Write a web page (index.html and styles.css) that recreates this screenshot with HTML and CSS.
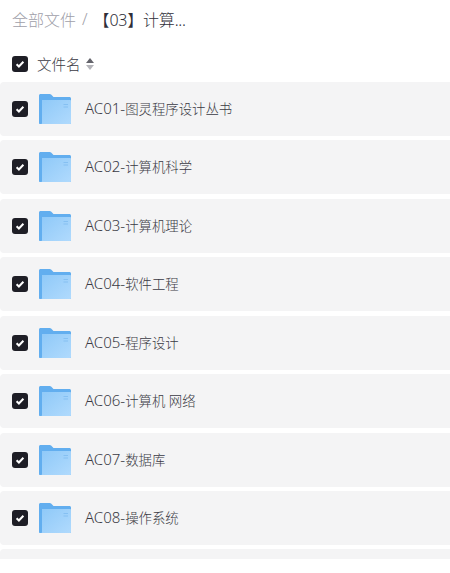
FILE: index.html
```html
<!DOCTYPE html>
<html lang="zh">
<head>
    <meta charset="UTF-8">
    <meta name="viewport" content="width=device-width, initial-scale=1.0">
    <title>全部文件</title>
    <link rel="stylesheet" href="styles.css">
</head>
<body>
    <svg class="defs" width="0" height="0" aria-hidden="true">
        <defs>
            <linearGradient id="folder-front" x1="0" y1="0" x2="1" y2="1">
                <stop offset="0" stop-color="#8fc9f8"/>
                <stop offset="1" stop-color="#b0dafd"/>
            </linearGradient>
            <symbol id="folder" viewBox="0 0 32 30">
                <path d="M0 1.500C0 .7.7 0 1.500 0h9.200c.6 0 1 .2 1.400.6L14.500 3h16c.8 0 1.500.7 1.500 1.500V29c0 .6-.4 1-1 1H1c-.6 0-1-.4-1-1z" fill="#62aeef"/>
                <path d="M3 6h28c.6 0 1 .4 1 1v22c0 .6-.4 1-1 1H2.500c.3-.2.500-.6.500-1z" fill="url(#folder-front)"/>
                <path d="M24.500 10h4.500v1h-4.500zM24.500 12.500h4.500v1h-4.500z" fill="#85c0f2"/>
            </symbol>
            <symbol id="check" viewBox="0 0 16 16">
                <rect width="16" height="16" rx="3" fill="#1e1e26"/>
                <path d="M4.600 8.200l2.300 2.300 4.500-4.800" fill="none" stroke="#fff" stroke-width="2"/>
            </symbol>
        </defs>
    </svg>

    <div class="breadcrumb">
        <span class="crumb-root">全部文件</span>
        <span class="crumb-sep">/</span>
        <span class="crumb-current">【03】计算...</span>
    </div>

    <div class="list-head">
        <svg class="checkbox"><use href="#check"/></svg>
        <span class="head-label">文件名</span>
        <svg class="sort" width="8" height="12" viewBox="0 0 8 12">
            <path d="M4 0l4 5H0z" fill="#63636b"/>
            <path d="M4 12L0 7h8z" fill="#b4b4b9"/>
        </svg>
    </div>

    <div class="file-list">
        <div class="file-row">
            <svg class="checkbox"><use href="#check"/></svg>
            <svg class="folder"><use href="#folder"/></svg>
            <span class="file-name"><span class="file-code">AC01-</span>图灵程序设计丛书</span>
        </div>
        <div class="file-row">
            <svg class="checkbox"><use href="#check"/></svg>
            <svg class="folder"><use href="#folder"/></svg>
            <span class="file-name"><span class="file-code">AC02-</span>计算机科学</span>
        </div>
        <div class="file-row">
            <svg class="checkbox"><use href="#check"/></svg>
            <svg class="folder"><use href="#folder"/></svg>
            <span class="file-name"><span class="file-code">AC03-</span>计算机理论</span>
        </div>
        <div class="file-row">
            <svg class="checkbox"><use href="#check"/></svg>
            <svg class="folder"><use href="#folder"/></svg>
            <span class="file-name"><span class="file-code">AC04-</span>软件工程</span>
        </div>
        <div class="file-row">
            <svg class="checkbox"><use href="#check"/></svg>
            <svg class="folder"><use href="#folder"/></svg>
            <span class="file-name"><span class="file-code">AC05-</span>程序设计</span>
        </div>
        <div class="file-row">
            <svg class="checkbox"><use href="#check"/></svg>
            <svg class="folder"><use href="#folder"/></svg>
            <span class="file-name"><span class="file-code">AC06-</span>计算机 网络</span>
        </div>
        <div class="file-row">
            <svg class="checkbox"><use href="#check"/></svg>
            <svg class="folder"><use href="#folder"/></svg>
            <span class="file-name"><span class="file-code">AC07-</span>数据库</span>
        </div>
        <div class="file-row">
            <svg class="checkbox"><use href="#check"/></svg>
            <svg class="folder"><use href="#folder"/></svg>
            <span class="file-name"><span class="file-code">AC08-</span>操作系统</span>
        </div>
        <div class="file-row"></div>
    </div>
</body>
</html>
```

FILE: styles.css
```css
html, body {
    height: 100%;
    overflow: hidden;
}
body {
    margin: 0;
    background-color: #fff;
    font-family: "Noto Sans", "Noto Sans CJK SC", sans-serif;
    font-weight: 300;
    color: #3a3a44;
}
.defs {
    position: absolute;
}
.breadcrumb {
    display: flex;
    align-items: center;
    gap: 6px;
    height: 37px;
    padding-bottom: 3px;
    padding-left: 12px;
    font-size: 16px;
}
.crumb-root {
    color: #a0a0a9;
}
.crumb-sep {
    color: #a0a0a9;
}
.crumb-current {
    color: #2f2f39;
    letter-spacing: -0.2px;
}
.list-head {
    display: flex;
    align-items: center;
    height: 48px;
    padding-left: 12px;
    font-size: 14.500px;
}
.head-label {
    margin-left: 9px;
    margin-bottom: 2px;
}
.sort {
    margin-left: 5px;
}
.checkbox {
    flex: none;
    width: 16px;
    height: 16px;
}
.file-list {
    display: flex;
    flex-direction: column;
    gap: 4.430px;
    height: 477px;
    margin-top: -6px;
    overflow: hidden;
}
.file-row {
    flex: none;
    display: flex;
    align-items: center;
    height: 54px;
    padding-left: 12px;
    background-color: #f4f4f5;
    border-radius: 4px 0 0 4px;
    font-size: 13.400px;
}
.folder {
    flex: none;
    width: 32px;
    height: 30px;
    margin-left: 11px;
}
.file-name {
    margin-left: 14px;
    margin-bottom: 2px;
}
.file-code {
    font-size: 15px;
}
```
